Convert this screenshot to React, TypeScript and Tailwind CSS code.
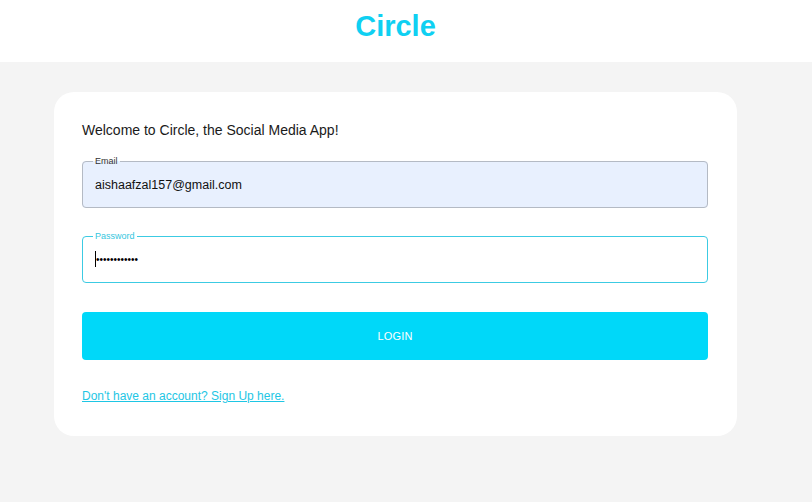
import { useState } from "react"

export default function App() {
    const [email, setEmail] = useState("aishaafzal157@gmail.com")
    const [password, setPassword] = useState("aishaafzal12")

    return (
        <div className="min-h-[502px] w-[812px] bg-[#f4f4f4] font-['Liberation_Sans',Arial,sans-serif] text-[#1a1a1a]">
            <header className="h-[62px] w-full bg-white">
                <div className="flex h-full w-[791px] items-center justify-center pb-[10px]">
                    <h1 className="text-[29px] font-bold leading-none text-[#0fd0f2]">Circle</h1>
                </div>
            </header>

            <main className="w-[791px] px-[54px] pt-[30px]">
                <form
                    className="flex flex-col rounded-[20px] bg-white pb-[32px] pl-[28px] pr-[29px] pt-[28px]"
                    onSubmit={(e) => e.preventDefault()}
                >
                    <p className="text-[14px] leading-[20px]">Welcome to Circle, the Social Media App!</p>

                    {/* email - autofilled look */}
                    <fieldset className="mt-[16px] h-[52px] rounded-[4px] border border-[#b4bac4] bg-[#e8f0fe] px-[12px]">
                        <legend className="ml-[-2px] px-[2px] text-[9px] leading-[10px] text-[#333]">Email</legend>
                        <input
                            className="h-[38px] w-full bg-transparent text-[12.5px] text-[#111] outline-none"
                            type="email"
                            name="email"
                            value={email}
                            onChange={(e) => setEmail(e.target.value)}
                        />
                    </fieldset>

                    {/* password - focused */}
                    <fieldset className="mt-[23px] h-[52px] rounded-[4px] border border-[#3ccbe3] px-[12px]">
                        <legend className="ml-[-2px] px-[2px] text-[9px] leading-[10px] text-[#35c6de]">Password</legend>
                        <div className="-mt-[1px] flex h-[38px] items-center">
                            <span className="h-[16px] w-px bg-black" />
                            <input
                                className="h-full w-full bg-transparent text-[10px] text-black outline-none"
                                type="password"
                                name="password"
                                value={password}
                                onChange={(e) => setPassword(e.target.value)}
                            />
                        </div>
                    </fieldset>

                    <button
                        className="mt-[29px] h-[48px] rounded-[4px] bg-[#00d8f9] text-[11px] tracking-[0.2px] text-white"
                        type="submit"
                    >
                        LOGIN
                    </button>

                    <a
                        className="mt-[28px] self-start text-[12px] leading-[16px] text-[#1ec6e4] underline"
                        href="#"
                    >
                        Don't have an account? Sign Up here.
                    </a>
                </form>
            </main>
        </div>
    )
}
